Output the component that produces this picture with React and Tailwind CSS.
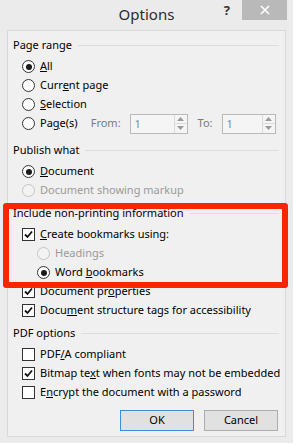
import React from 'react';

const Radio = ({ checked, disabled }) => (
  <span
    className={`w-[13px] h-[13px] rounded-full border flex items-center justify-center shrink-0 ${
      disabled ? 'border-[#c4c4c4] bg-[#f3f3f3]' : 'border-[#333333] bg-white'
    }`}
  >
    {checked && <span className="w-[6px] h-[6px] rounded-full bg-[#1a1a1a]" />}
  </span>
);

const Check = ({ checked }) => (
  <span className="w-[13px] h-[13px] border border-[#333333] bg-white flex items-center justify-center shrink-0">
    {checked && (
      <svg width="9" height="9" viewBox="0 0 9 9">
        <path d="M1 4.5 L3.5 7 L8 1.5" stroke="#111" strokeWidth="1.8" fill="none" />
      </svg>
    )}
  </span>
);

const Row = ({ children, indent = 'pl-[9px]', disabled }) => (
  <div
    className={`h-[19px] flex items-center gap-[5px] whitespace-nowrap ${indent} ${
      disabled ? 'text-[#9a9a9a]' : 'text-black'
    }`}
  >
    {children}
  </div>
);

const Header = ({ title, className = '' }) => (
  <div className={`h-[19px] flex items-center gap-[6px] whitespace-nowrap ${className}`}>
    <span>{title}</span>
    <span className="flex-1 h-px bg-[#dcdcdc]" />
  </div>
);

const Spin = ({ width }) => (
  <div className={`h-[20px] ${width} border border-[#b9b9b9] bg-[#f5f5f5] flex`}>
    <span className="flex-1 pl-[4px] text-[#8a8a8a] leading-[18px]">1</span>
    <div className="w-[13px] flex flex-col border-l border-[#dadada]">
      <div className="flex-1 flex items-center justify-center border-b border-[#dadada]">
        <svg width="7" height="4" viewBox="0 0 7 4">
          <path d="M0 4 L3.5 0 L7 4 Z" fill="#9a9a9a" />
        </svg>
      </div>
      <div className="flex-1 flex items-center justify-center">
        <svg width="7" height="4" viewBox="0 0 7 4">
          <path d="M0 0 L3.5 4 L7 0 Z" fill="#9a9a9a" />
        </svg>
      </div>
    </div>
  </div>
);

export default function App() {
  return (
    <div
      className="w-[293px] h-[443px] bg-[#ebebeb] relative text-[11px] text-black overflow-hidden"
      style={{ fontFamily: '"Noto Sans", "Liberation Sans", sans-serif' }}
    >
      {/* Title bar */}
      <div className="h-[30px] grid grid-cols-[1fr_auto_1fr]">
        <div />
        <div className="text-[15px] text-[#2b2b2b] flex items-center pb-[1px]">Options</div>
        <div className="flex justify-end items-start">
          <span className="text-[13px] font-bold text-[#333] leading-[20px] mr-[12px]">?</span>
          <div className="w-[45px] h-[20px] bg-[#b9b9b9] flex items-center justify-center mr-[6px]">
            <svg width="10" height="10" viewBox="0 0 10 10">
              <path d="M1 1 L9 9 M9 1 L1 9" stroke="white" strokeWidth="1.6" />
            </svg>
          </div>
        </div>
      </div>

      {/* Content panel */}
      <div className="mx-[7px] h-[407px] border border-[#d9d9d9] bg-[#f0f0f0] pt-[5px] pl-[5px] pr-[6px]">
        <Header title="Page range" />
        <div className="mt-[2px]">
          <Row>
            <Radio checked />
            <span><u>A</u>ll</span>
          </Row>
          <Row>
            <Radio />
            <span>Curr<u>e</u>nt page</span>
          </Row>
          <Row>
            <Radio />
            <span><u>S</u>election</span>
          </Row>
          <Row>
            <Radio />
            <span>Pa<u>g</u>e(s)</span>
            <span className="ml-[8px] text-[#7a7a7a]">From:</span>
            <span className="ml-[4px]"><Spin width="w-[58px]" /></span>
            <span className="ml-[5px] text-[#7a7a7a]">To:</span>
            <span className="ml-[4px]"><Spin width="w-[54px]" /></span>
          </Row>
        </div>

        <Header title="Publish what" className="mt-[8px]" />
        <div className="mt-[2px]">
          <Row>
            <Radio checked />
            <span><u>D</u>ocument</span>
          </Row>
          <Row disabled>
            <Radio disabled />
            <span>Document showing markup</span>
          </Row>
        </div>

        <Header title="Include non-printing information" className="mt-[4px]" />
        <div className="mt-[2px]">
          <Row>
            <Check checked />
            <span><u>C</u>reate bookmarks using:</span>
          </Row>
          <Row indent="pl-[24px]" disabled>
            <Radio disabled />
            <span>Headings</span>
          </Row>
          <Row indent="pl-[24px]">
            <Radio checked />
            <span>Word <u>b</u>ookmarks</span>
          </Row>
          <Row>
            <Check checked />
            <span>Document pr<u>o</u>perties</span>
          </Row>
          <Row>
            <Check checked />
            <span>Docu<u>m</u>ent structure tags for accessibility</span>
          </Row>
        </div>

        <Header title="PDF options" className="mt-[4px]" />
        <div className="mt-[2px]">
          <Row>
            <Check />
            <span>PDF<u>/</u>A compliant</span>
          </Row>
          <Row>
            <Check checked />
            <span>Bitmap te<u>x</u>t when fonts may not be embedded</span>
          </Row>
          <Row>
            <Check />
            <span>E<u>n</u>crypt the document with a password</span>
          </Row>
        </div>

        <div className="mt-[8px] flex justify-end gap-[10px] pr-[1px]">
          <button className="w-[74px] h-[21px] bg-[#e1e1e1] border border-[#3c8ee0] text-black">OK</button>
          <button className="w-[74px] h-[21px] bg-[#e1e1e1] border border-[#adadad] text-black">Cancel</button>
        </div>
      </div>

      {/* Red annotation box */}
      <div className="absolute left-[3px] top-[203px] w-[285px] h-[85px] border-[6px] border-[#ff2400] rounded-[3px]" />
    </div>
  );
}
